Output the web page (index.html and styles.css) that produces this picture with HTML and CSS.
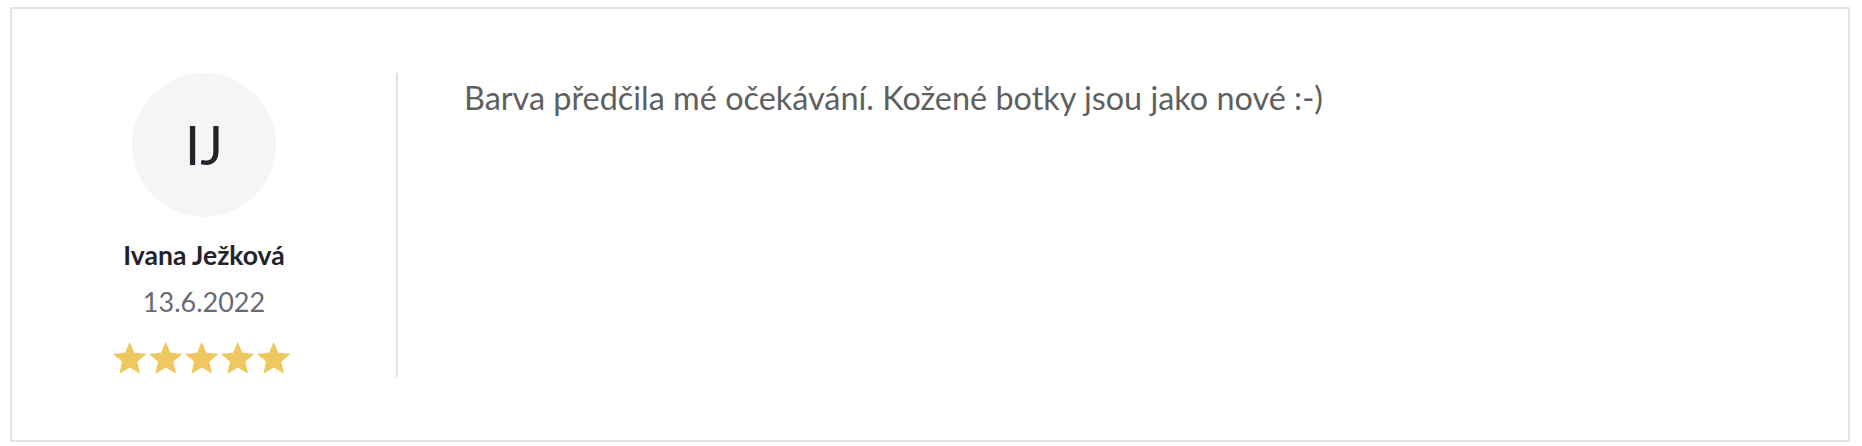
FILE: index.html
```html
<!DOCTYPE html>
<html lang="cs">
<head>
<meta charset="utf-8">
<title>Recenze</title>
<link rel="stylesheet" href="styles.css">
</head>
<body>
<div class="page">
  <article class="review">
    <aside class="author">
      <div class="avatar">IJ</div>
      <div class="name">Ivana Ježková</div>
      <div class="date">13.6.2022</div>
      <div class="stars">
        <svg class="star" viewBox="1 0.5 22 20.8"><polygon points="12,0.5 15.1,7.6 23,8.3 17,13.5 18.8,21.3 12,17.2 5.2,21.3 7,13.5 1,8.3 8.9,7.6"/></svg>
        <svg class="star" viewBox="1 0.5 22 20.8"><polygon points="12,0.5 15.1,7.6 23,8.3 17,13.5 18.8,21.3 12,17.2 5.2,21.3 7,13.5 1,8.3 8.9,7.6"/></svg>
        <svg class="star" viewBox="1 0.5 22 20.8"><polygon points="12,0.5 15.1,7.6 23,8.3 17,13.5 18.8,21.3 12,17.2 5.2,21.3 7,13.5 1,8.3 8.9,7.6"/></svg>
        <svg class="star" viewBox="1 0.5 22 20.8"><polygon points="12,0.5 15.1,7.6 23,8.3 17,13.5 18.8,21.3 12,17.2 5.2,21.3 7,13.5 1,8.3 8.9,7.6"/></svg>
        <svg class="star" viewBox="1 0.5 22 20.8"><polygon points="12,0.5 15.1,7.6 23,8.3 17,13.5 18.8,21.3 12,17.2 5.2,21.3 7,13.5 1,8.3 8.9,7.6"/></svg>
      </div>
    </aside>
    <div class="content">
      <p class="text">Barva předčila mé očekávání. Kožené botky jsou jako nové :-)</p>
    </div>
  </article>
</div>
</body>
</html>
```

FILE: styles.css
```css
* { box-sizing: border-box; }
html, body { margin: 0; padding: 0; background: #fff; }
body { font-family: Lato, "Noto Sans", sans-serif; }

.page {
  padding: 7px 12px 4px 10px;
}

.review {
  display: flex;
  border: 2px solid #e4e4e4;
  padding: 64px 0 63px;
}

.author {
  width: 386px;
  height: 304px;
  flex: none;
  display: flex;
  flex-direction: column;
  align-items: center;
  border-right: 2px solid #e2e2e2;
}

.avatar {
  width: 144px;
  height: 144px;
  border-radius: 50%;
  background: #f5f5f5;
  display: flex;
  align-items: center;
  justify-content: center;
  font-size: 54px;
  color: #23232b;
  line-height: 1;
}

.name {
  margin-top: 23px;
  font-size: 26.5px;
  font-weight: 700;
  color: #22222b;
  line-height: 30px;
}

.date {
  margin-top: 15px;
  font-size: 27px;
  color: #6a6a76;
  line-height: 34px;
}

.stars {
  margin-top: 23px;
  margin-left: -5px;
  display: flex;
  gap: 2.5px;
}

.star {
  width: 33.5px;
  height: 31.7px;
  fill: #efc75e;
}

.content {
  flex: 1;
  padding-left: 66px;
}

.text {
  margin: 0;
  font-size: 32.4px;
  line-height: 50px;
  color: #5f5f5f;
}
```
